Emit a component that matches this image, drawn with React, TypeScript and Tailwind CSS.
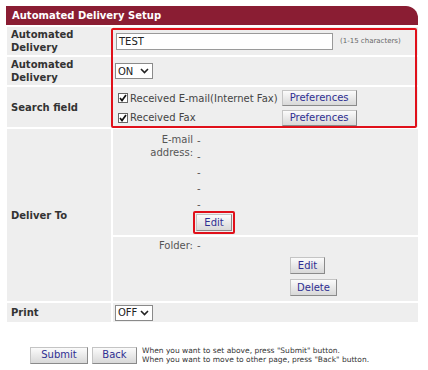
import React from "react";

const Btn = ({ label, className }: { label: string; className: string }) => (
  <button
    className={`flex items-center justify-center bg-gradient-to-b from-[#fbfbfb] to-[#d8d8d8] border border-[#c4c4c4] border-r-[#8a8a8a] border-b-[#8a8a8a] text-[10px] text-[#2f2f92] leading-none ${className}`}
  >
    {label}
  </button>
);

const Select = ({ value }: { value: string }) => (
  <div className="flex items-center justify-between w-[38px] h-[16px] border border-[#8a8a8a] bg-white pl-[2px] pr-[3px] text-[10px] text-[#222]">
    <span>{value}</span>
    <svg width="9" height="6" viewBox="0 0 9 6">
      <polyline points="1,1 4.5,4.5 8,1" fill="none" stroke="#222" strokeWidth="1.6" />
    </svg>
  </div>
);

const Check = () => (
  <span className="flex items-center justify-center w-[10px] h-[10px] border border-[#666] bg-white">
    <svg width="8" height="8" viewBox="0 0 8 8">
      <polyline points="1,4 3,6.5 7,1" fill="none" stroke="#111" strokeWidth="1.7" />
    </svg>
  </span>
);

export default function App() {
  return (
    <div className="w-[428px] h-[370px] bg-white font-['DejaVu_Sans',sans-serif] text-[10px]">
      <div className="pt-[6px] pl-[6px] w-[418px]">
        {/* title bar */}
        <div className="h-[19px] bg-[#8a1d33] rounded-tr-[12px] text-white font-bold pl-[6px] flex items-center">
          Automated Delivery Setup
        </div>

        <div className="relative mt-[2px] pl-[1px] flex flex-col gap-[2px]">
          {/* row 1 */}
          <div className="flex gap-[2px] h-[28px]">
            <div className="w-[104px] bg-[#eeeeee] pl-[4px] font-bold text-[#333] leading-[13px] flex items-center">
              Automated<br />Delivery
            </div>
            <div className="flex-1 bg-[#eeeeee] pl-[3px] flex items-center">
              <div className="w-[217px] h-[17px] border border-[#9a9a9a] bg-white pl-[2px] flex items-center text-[#222]">
                TEST
              </div>
              <span className="ml-[7px] text-[7px] text-[#666]">(1-15 characters)</span>
            </div>
          </div>

          {/* row 2 */}
          <div className="flex gap-[2px] h-[28px]">
            <div className="w-[104px] bg-[#eeeeee] pl-[4px] font-bold text-[#333] leading-[13px] flex items-center">
              Automated<br />Delivery
            </div>
            <div className="flex-1 bg-[#eeeeee] pl-[2px] flex items-center">
              <Select value="ON" />
            </div>
          </div>

          {/* row 3 */}
          <div className="flex gap-[2px] h-[40px]">
            <div className="w-[104px] bg-[#eeeeee] pl-[4px] font-bold text-[#333] flex items-center">
              Search field
            </div>
            <div className="flex-1 bg-[#eeeeee] pl-[5px] pt-[3px] grid grid-cols-[auto_auto] justify-start gap-y-[2px] text-[#444]">
              <div className="flex items-center h-[16px] gap-[2px]">
                <Check />
                <span>Received E-mail(Internet Fax)</span>
              </div>
              <Btn label="Preferences" className="ml-[4px] w-[75px] h-[16px]" />
              <div className="flex items-center h-[16px] gap-[2px]">
                <Check />
                <span>Received Fax</span>
              </div>
              <Btn label="Preferences" className="ml-[4px] w-[75px] h-[16px]" />
            </div>
          </div>

          {/* deliver to */}
          <div className="flex gap-[2px]">
            <div className="w-[104px] bg-[#eeeeee] pl-[4px] font-bold text-[#333] flex items-center">
              Deliver To
            </div>
            <div className="flex-1 flex flex-col gap-[2px] text-[#555]">
              <div className="h-[106px] bg-[#eeeeee] flex">
                <div className="w-[80px] text-right pt-[4px] leading-[13px]">
                  E-mail<br />address:
                </div>
                <div className="pt-[3px] flex flex-col">
                  {[0, 1, 2, 3, 4].map((i) => (
                    <div key={i} className="h-[16px] flex items-center pl-[4px]">-</div>
                  ))}
                  <div className="mt-[-1px] w-fit border-2 border-[#e0101a] rounded-[2px] p-[1px]">
                    <Btn label="Edit" className="w-[36px] h-[17px]" />
                  </div>
                </div>
              </div>
              <div className="h-[64px] bg-[#eeeeee] pt-[2px] flex flex-col">
                <div className="flex leading-[13px]">
                  <div className="w-[80px] text-right">Folder:</div>
                  <div className="pl-[4px]">-</div>
                </div>
                <div className="pl-[177px] mt-[5px] flex flex-col items-start gap-[5px]">
                  <Btn label="Edit" className="w-[35px] h-[17px]" />
                  <Btn label="Delete" className="w-[47px] h-[17px]" />
                </div>
              </div>
            </div>
          </div>

          {/* print */}
          <div className="flex gap-[2px] h-[19px]">
            <div className="w-[104px] bg-[#eeeeee] pl-[4px] font-bold text-[#333] flex items-center">
              Print
            </div>
            <div className="flex-1 bg-[#eeeeee] pl-[2px] flex items-center">
              <Select value="OFF" />
            </div>
          </div>

          {/* highlight */}
          <div className="absolute left-[105px] top-[1px] w-[306px] h-[100px] border-2 border-[#e0101a] rounded-[2px] pointer-events-none" />
        </div>
      </div>

      {/* footer */}
      <div className="mt-[24px] pl-[30px] flex items-center">
        <Btn label="Submit" className="w-[58px] h-[17px]" />
        <Btn label="Back" className="ml-[4px] w-[45px] h-[17px]" />
        <div className="ml-[5px] text-[7.5px] leading-[9px] text-[#333]">
          When you want to set above, press "Submit" button.<br />
          When you want to move to other page, press "Back" button.
        </div>
      </div>
    </div>
  );
}
